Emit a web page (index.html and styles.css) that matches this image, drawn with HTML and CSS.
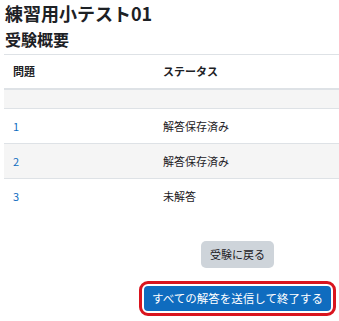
FILE: index.html
```html
<!DOCTYPE html>
<html lang="ja">
<head>
  <meta charset="UTF-8" />
  <meta name="viewport" content="width=device-width, initial-scale=1.0"/>
  <title>練習用小テスト01</title>
  <link rel="stylesheet" href="styles.css">
</head>
<body>
  <div class="page">
    <h1 class="quiz-title">練習用小テスト01</h1>
    <h2 class="section-title">受験概要</h2>

    <!-- Summary table -->
    <table class="summary">
      <thead>
        <tr>
          <th class="col-num">問題</th>
          <th>ステータス</th>
        </tr>
      </thead>
      <tbody>
        <tr class="striped empty"><td></td><td></td></tr>
        <tr>
          <td class="col-num"><a href="#">1</a></td>
          <td>解答保存済み</td>
        </tr>
        <tr class="striped">
          <td class="col-num"><a href="#">2</a></td>
          <td>解答保存済み</td>
        </tr>
        <tr>
          <td class="col-num"><a href="#">3</a></td>
          <td>未解答</td>
        </tr>
      </tbody>
    </table>

    <div class="submit-buttons">
      <button class="btn btn-secondary">受験に戻る</button>
      <span class="highlight">
        <button class="btn btn-primary">すべての解答を送信して終了する</button>
      </span>
    </div>
  </div>
</body>
</html>
```

FILE: styles.css
```css
:root {
  --text: #1d2125;
  --link: #0f6cbf;
  --border: #dee2e6;
  --stripe: #f5f5f5;
  --primary: #0f6cbf;
  --secondary: #ced4da;
  --mark: #d9141e;
}

body {
  margin: 0;
  padding: 0;
  font-family: "Noto Sans CJK JP", "Noto Sans", sans-serif;
  color: var(--text);
  background-color: #fff;
  overflow: hidden;
}

.page {
  padding-left: 4px;
}

.quiz-title {
  margin: 1px 0 0 1px;
  font-size: 18px;
  line-height: 24px;
  font-weight: 700;
}

.section-title {
  margin: 3px 0 0 1px;
  font-size: 16px;
  line-height: 22px;
  font-weight: 700;
}

.summary {
  margin-top: 4px;
  width: 340px;
  border-collapse: collapse;
  font-size: 11px;
  line-height: 17px;
}

.summary th {
  text-align: left;
  font-weight: 700;
  padding: 8px 9px 8px;
  border-top: 1px solid var(--border);
  border-bottom: 2px solid var(--border);
}

.summary td {
  padding: 9px 9px 8px;
  border-top: 1px solid var(--border);
}

.summary .col-num {
  width: 132px;
}

.summary tr.striped td {
  background-color: var(--stripe);
}

.summary tr.empty td {
  padding: 0;
  height: 18px;
}

.summary a {
  color: var(--link);
  text-decoration: none;
}

.submit-buttons {
  display: flex;
  flex-direction: column;
  align-items: center;
  padding-left: 132px;
  margin-top: 28px;
}

.btn {
  font-family: inherit;
  border: none;
  border-radius: 5px;
  cursor: pointer;
}

.btn-secondary {
  background-color: var(--secondary);
  color: var(--text);
  font-size: 11px;
  line-height: 17px;
  padding: 5px 9px 5px;
}

.highlight {
  display: inline-block;
  margin-top: 13px;
  padding: 2px;
  border: 3px solid var(--mark);
  border-radius: 9px;
}

.btn-primary {
  display: block;
  background-color: var(--primary);
  color: #fff;
  font-size: 11.5px;
  line-height: 17px;
  padding: 4px 8px 4px;
  border-radius: 4px;
}
```
